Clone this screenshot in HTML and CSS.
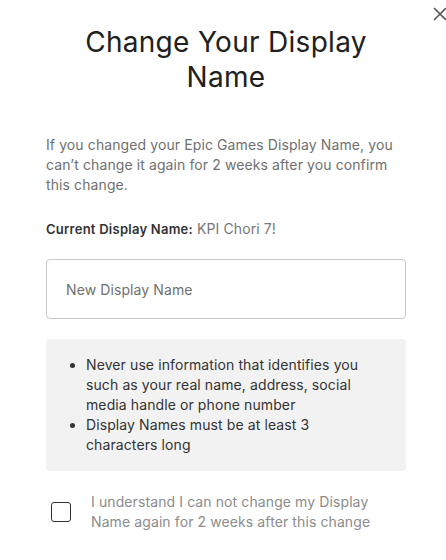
FILE: index.html
```html
<!DOCTYPE html>
<html>
<head>
<meta charset="utf-8">
<link rel="stylesheet" href="styles.css">
</head>
<body>
<div class="dialog">
  <button class="close" aria-label="Close">
    <svg width="14" height="14" viewBox="0 0 14 14"><path d="M1 1L13 13M13 1L1 13" stroke="#555" stroke-width="1.6" fill="none"/></svg>
  </button>
  <h1 class="title">Change Your Display Name</h1>
  <p class="intro">If you changed your Epic Games Display Name, you can’t change it again for 2 weeks after you confirm this change.</p>
  <p class="current"><strong>Current Display Name:</strong> KPI Chori 7!</p>
  <div class="field">New Display Name</div>
  <div class="rules">
    <ul>
      <li>Never use information that identifies you such as your real name, address, social media handle or phone number</li>
      <li>Display Names must be at least 3 characters long</li>
    </ul>
  </div>
  <label class="agree">
    <span class="box"></span>
    <span class="agree-text">I understand I can not change my Display Name again for 2 weeks after this change</span>
  </label>
</div>
</body>
</html>
```
FILE: styles.css
```css
html, body {
  margin: 0;
  padding: 0;
  background: #fff;
}
body {
  font-family: Inter, "Noto Sans", sans-serif;
  color: #333;
  letter-spacing: 0.1px;
}
.dialog {
  position: relative;
  width: 446px;
  height: 560px;
  box-sizing: border-box;
  padding: 25px 40px 0 46px;
  overflow: hidden;
}
.close {
  position: absolute;
  top: 7px;
  right: -1px;
  border: 0;
  background: none;
  padding: 0;
  width: 14px;
  height: 14px;
}
.close svg { display: block; }
.title {
  margin: 0 auto;
  width: 300px;
  text-align: center;
  font-size: 28px;
  font-weight: 400;
  line-height: 35px;
  letter-spacing: 0.3px;
  color: #202020;
}
.intro {
  margin: 40px 0 0;
  font-size: 14px;
  line-height: 20px;
  color: #707070;
}
.current {
  margin: 24px 0 0;
  font-size: 14px;
  line-height: 20px;
  color: #777;
}
.current strong {
  font-size: 13px;
  font-weight: 600;
  letter-spacing: 0.25px;
  color: #333;
}
.field {
  margin-top: 20px;
  height: 60px;
  box-sizing: border-box;
  border: 1px solid #c8c8c8;
  border-radius: 4px;
  padding: 0 19px;
  display: flex;
  align-items: center;
  font-size: 14px;
  color: #707070;
}
.rules {
  margin-top: 20px;
  background: #f2f2f2;
  border-radius: 4px;
  padding: 16px 40px 16px 0;
}
.rules ul {
  margin: 0;
  padding-left: 40px;
  font-size: 14px;
  line-height: 20px;
  color: #333;
}
.agree {
  margin-top: 21px;
  display: flex;
  align-items: center;
  gap: 20px;
  padding-left: 5px;
}
.box {
  width: 20px;
  height: 20px;
  box-sizing: border-box;
  border: 1px solid #333;
  border-radius: 3px;
  flex: none;
}
.agree-text {
  font-size: 14px;
  line-height: 20px;
  color: #8c8c8c;
}
```
